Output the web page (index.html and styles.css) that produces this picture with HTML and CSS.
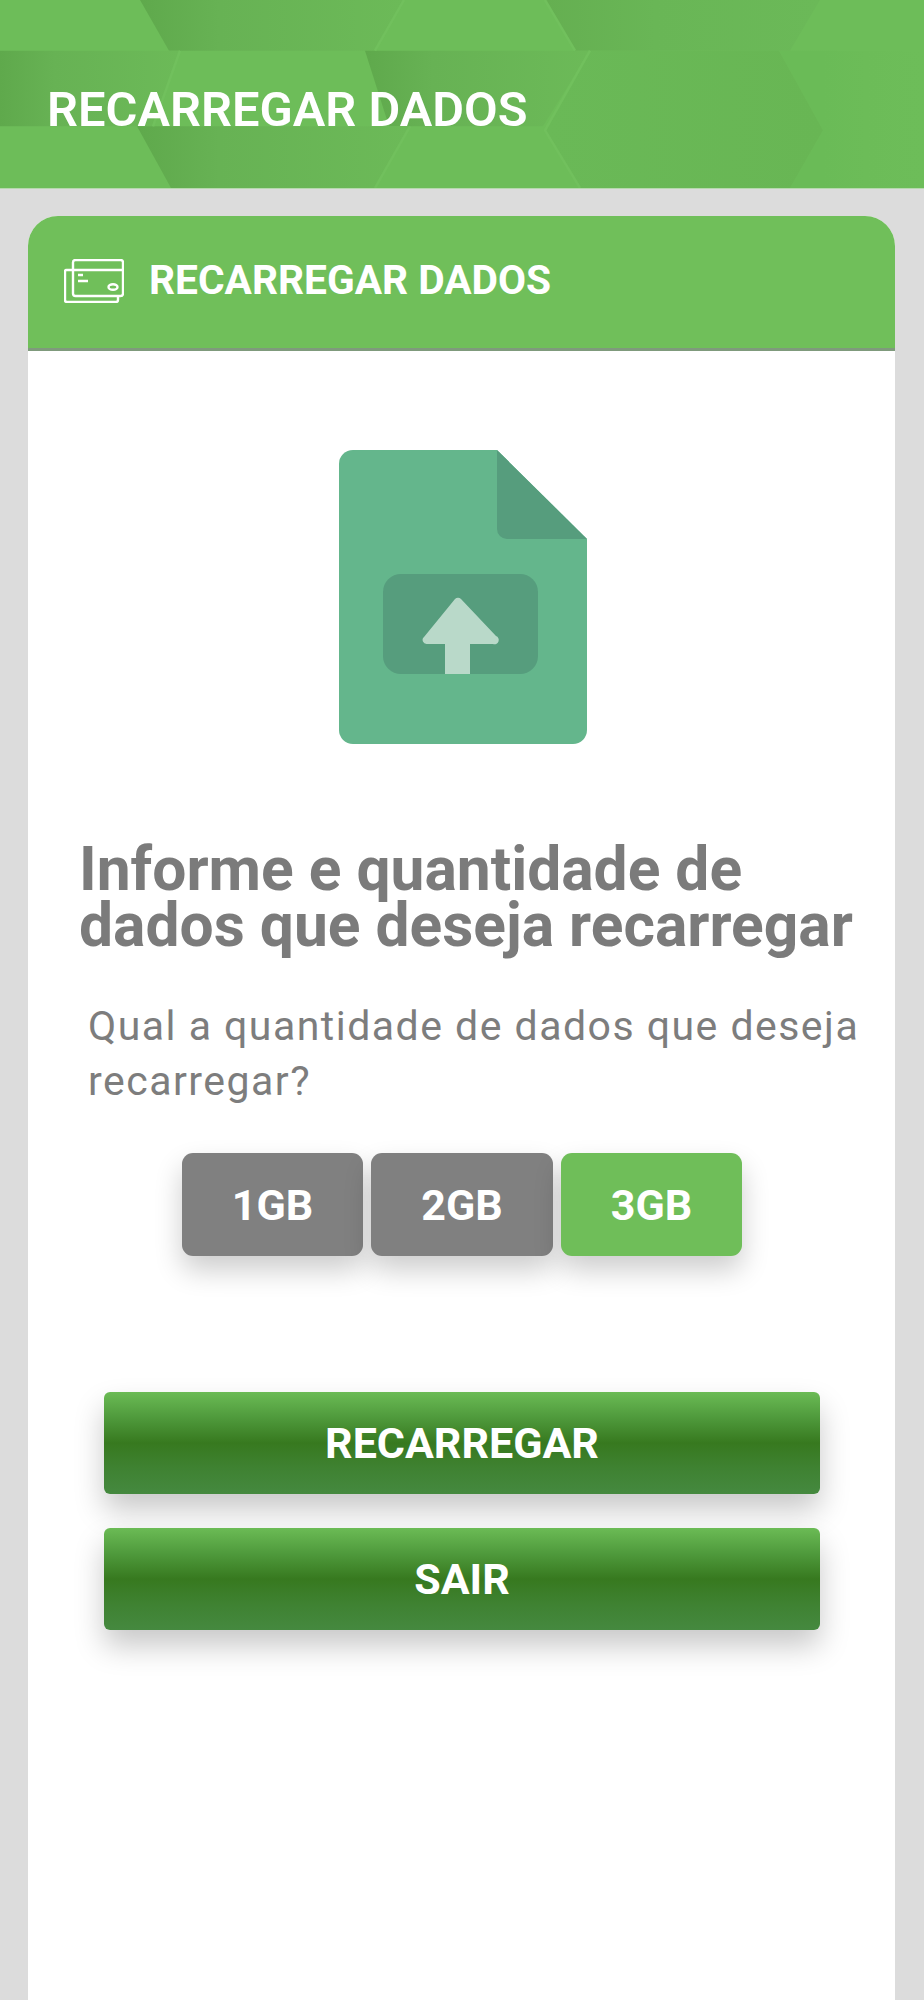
FILE: index.html
```html
<!DOCTYPE html>
<html lang="pt">
<head>
<meta charset="utf-8">
<title>Recarregar dados</title>
<link rel="stylesheet" href="styles.css">
</head>
<body>
<header class="topbar">
  <svg class="hex-bg" viewBox="0 0 924 189" preserveAspectRatio="none" aria-hidden="true">
    <defs>
      <linearGradient id="sh1" x1="0" y1="0" x2="1" y2="0">
        <stop offset="0" stop-color="#5fa94c"/><stop offset="0.3" stop-color="#67b254"/><stop offset="1" stop-color="#6cba58"/>
      </linearGradient>
      <linearGradient id="sh2" x1="0" y1="0" x2="1" y2="0">
        <stop offset="0" stop-color="#65af51"/><stop offset="0.4" stop-color="#69b656"/><stop offset="1" stop-color="#6bb958"/>
      </linearGradient>
      <linearGradient id="sh3" x1="0" y1="0" x2="1" y2="0">
        <stop offset="0" stop-color="#6ab957"/><stop offset="1" stop-color="#68b654"/>
      </linearGradient>
      <linearGradient id="sh4" x1="0" y1="0" x2="1" y2="0">
        <stop offset="0.3" stop-color="#6abb57"/><stop offset="0.6" stop-color="#6cbc58"/><stop offset="1" stop-color="#6dbd59"/>
      </linearGradient>
    </defs>
    <rect width="924" height="189" fill="#6dbd59"/>
    <polygon points="779,51 924,51 924,189 790,189 823,131" fill="url(#sh4)"/>
    <polygon points="140,0 404,0 375,51 169,51" fill="url(#sh1)"/>
    <polygon points="545,0 820,0 790,51 575,51" fill="url(#sh2)"/>
    <polygon points="0,51 180,51 153,127 0,127" fill="url(#sh1)"/>
    <polygon points="365,51 590,51 543,127 389,127" fill="url(#sh1)"/>
    <polygon points="590,51 779,51 823,131 790,189 580,189 545,131" fill="url(#sh3)"/>
    <polygon points="137,127 410,127 375,189 171,189" fill="url(#sh1)"/>
    <g class="hex-edges">
      <path d="M404 0L375 51M545 0L575 51M590 51L545 131L580 189M180 51L153 127M410 127L375 189"/>
    </g>
  </svg>
  <h1 class="topbar-title">RECARREGAR DADOS</h1>
</header>
<main class="card">
  <div class="card-head">
    <svg class="card-icon" viewBox="0 0 60 44" aria-hidden="true">
      <rect x="9" y="1" width="50" height="36" rx="2.5"/>
      <path d="M9 11H59"/>
      <path d="M9 11H2.5a1.5 1.5 0 0 0-1.5 1.5V41a2 2 0 0 0 2 2H52a2 2 0 0 0 2-2V37"/>
      <path d="M14 16H19M14 22H24"/>
      <ellipse cx="49" cy="28" rx="4.5" ry="2.8"/>
    </svg>
    <h2 class="card-title">RECARREGAR DADOS</h2>
  </div>
  <div class="card-body">
    <svg class="file-icon" viewBox="0 0 248 294" aria-hidden="true">
      <path d="M14 0H158L248 89V280a14 14 0 0 1-14 14H14a14 14 0 0 1-14-14V14A14 14 0 0 1 14 0Z" fill="#64b68c"/>
      <path d="M158 0L248 89H168a10 10 0 0 1-10-10Z" fill="#569d7d"/>
      <rect x="44" y="124" width="155" height="100" rx="18" fill="#569d7d"/>
      <path d="M106 224V194H88a4 4 0 0 1-3-7L116 149a4 4 0 0 1 6 0L157 186a4 4 0 0 1-3 8H131V224Z" fill="#b9d9c9"/>
    </svg>
    <h3 class="headline">Informe e quantidade de dados que deseja recarregar</h3>
    <p class="question">Qual a quantidade de dados que deseja recarregar?</p>
    <div class="options">
      <button class="option">1GB</button>
      <button class="option option-wide">2GB</button>
      <button class="option option-active">3GB</button>
    </div>
    <div class="actions">
      <button class="action">RECARREGAR</button>
      <button class="action">SAIR</button>
    </div>
  </div>
</main>
</body>
</html>
```

FILE: styles.css
```css
* { box-sizing: border-box; }
html, body { margin: 0; height: 2000px; overflow: hidden; }
body {
  background: #dcdcdc;
  font-family: Roboto, "Liberation Sans", sans-serif;
  display: flex;
  flex-direction: column;
}
.topbar {
  position: relative;
  height: 189px;
  flex: none;
  display: flex;
  align-items: center;
  padding: 0 0 0 47px;
  border-bottom: 1px solid #b7d9ae;
}
.hex-bg { position: absolute; inset: 0; width: 100%; height: 100%; }
.hex-edges path { fill: none; stroke: #71c05d; stroke-width: 2.5; }
.topbar-title {
  position: relative;
  margin: 0;
  padding-top: 32px;
  font-size: 48.8px;
  line-height: 48px;
  font-weight: 600;
  color: #fff;
  white-space: nowrap;
}
.card {
  flex: 1;
  margin: 27px 29px 0 28px;
  background: #fff;
  border-radius: 30px 30px 0 0;
  overflow: hidden;
}
.card-head {
  height: 135px;
  background: #70bf5a;
  border-bottom: 3px solid #7f9a7c;
  display: flex;
  align-items: flex-start;
  padding: 43px 0 0 36px;
  gap: 25px;
}
.card-icon { width: 60px; height: 44px; flex: none; }
.card-icon rect, .card-icon path, .card-icon ellipse {
  fill: none;
  stroke: #fff;
  stroke-width: 2.4;
}
.card-title {
  margin: 0;
  font-size: 40.7px;
  line-height: 42px;
  font-weight: 700;
  color: #fff;
  white-space: nowrap;
}
.card-body { display: flex; flex-direction: column; }
.file-icon { width: 248px; height: 294px; margin: 99px 0 0 311px; }
.headline {
  margin: 98px 10px 0 51px;
  font-size: 60.5px;
  line-height: 56px;
  font-weight: 700;
  color: #7b7b7b;
}
.question {
  margin: 45px 20px 0 60px;
  font-size: 41px;
  line-height: 55px;
  font-weight: 400;
  letter-spacing: 1.48px;
  color: #7d7d7d;
}
.options {
  display: flex;
  margin: 44px 0 0 154px;
  gap: 8px;
}
.option {
  width: 181px;
  height: 103px;
  border: 0;
  border-radius: 11px;
  background: #808080;
  color: #fff;
  font: 700 43px Roboto, sans-serif;
  box-shadow: 0 14px 28px rgba(0, 0, 0, 0.2);
}
.option-wide { width: 182px; }
.option-active { background: #6fbe59; }
.actions {
  display: flex;
  flex-direction: column;
  gap: 34px;
  margin: 136px 75px 0 76px;
}
.action {
  height: 102px;
  border: 0;
  border-radius: 6px;
  background: linear-gradient(to bottom, #6bbb55 0%, #4f9a3c 25%, #37791f 50%, #3f8232 75%, #45893f 100%);
  color: #fff;
  font: 700 43px Roboto, sans-serif;
  box-shadow: 0 16px 30px rgba(0, 0, 0, 0.22);
}
```
